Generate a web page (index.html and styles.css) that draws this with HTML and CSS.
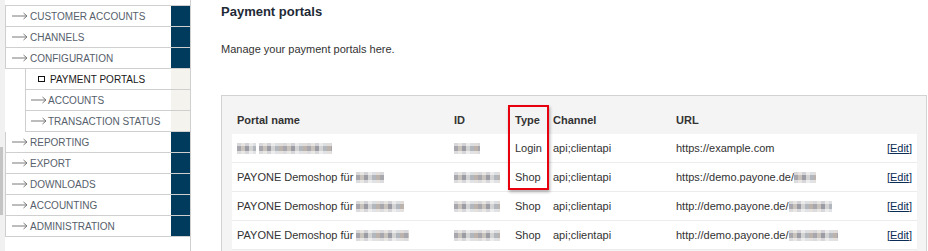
FILE: index.html
```html
<!DOCTYPE html>
<html lang="de">
<head>
    <meta charset="UTF-8">
    <title>Payment portals</title>
    <link rel="stylesheet" href="styles.css">
</head>
<body>
    <div class="frame-scroll"><div class="frame-thumb"></div></div>

    <div class="sidebar">
        <ul class="menu">
            <li class="menu-item"><a class="menu-link"><svg class="arrow" width="16" height="8" viewBox="0 0 16 8"><path d="M0 4H15M11.5 1L15 4L11.5 7"/></svg>CUSTOMER ACCOUNTS</a><span class="mark"></span></li>
            <li class="menu-item"><a class="menu-link"><svg class="arrow" width="16" height="8" viewBox="0 0 16 8"><path d="M0 4H15M11.5 1L15 4L11.5 7"/></svg>CHANNELS</a><span class="mark"></span></li>
            <li class="menu-item"><a class="menu-link"><svg class="arrow" width="16" height="8" viewBox="0 0 16 8"><path d="M0 4H15M11.5 1L15 4L11.5 7"/></svg>CONFIGURATION</a><span class="mark"></span></li>
            <li>
                <ul class="submenu">
                    <li class="menu-item active"><a class="menu-link"><span class="square"></span>PAYMENT PORTALS</a><span class="mark"></span></li>
                    <li class="menu-item"><a class="menu-link"><svg class="arrow" width="16" height="8" viewBox="0 0 16 8"><path d="M0 4H15M11.5 1L15 4L11.5 7"/></svg>ACCOUNTS</a><span class="mark"></span></li>
                    <li class="menu-item"><a class="menu-link"><svg class="arrow" width="16" height="8" viewBox="0 0 16 8"><path d="M0 4H15M11.5 1L15 4L11.5 7"/></svg>TRANSACTION STATUS</a><span class="mark"></span></li>
                </ul>
            </li>
            <li class="menu-item"><a class="menu-link"><svg class="arrow" width="16" height="8" viewBox="0 0 16 8"><path d="M0 4H15M11.5 1L15 4L11.5 7"/></svg>REPORTING</a><span class="mark"></span></li>
            <li class="menu-item"><a class="menu-link"><svg class="arrow" width="16" height="8" viewBox="0 0 16 8"><path d="M0 4H15M11.5 1L15 4L11.5 7"/></svg>EXPORT</a><span class="mark"></span></li>
            <li class="menu-item"><a class="menu-link"><svg class="arrow" width="16" height="8" viewBox="0 0 16 8"><path d="M0 4H15M11.5 1L15 4L11.5 7"/></svg>DOWNLOADS</a><span class="mark"></span></li>
            <li class="menu-item"><a class="menu-link"><svg class="arrow" width="16" height="8" viewBox="0 0 16 8"><path d="M0 4H15M11.5 1L15 4L11.5 7"/></svg>ACCOUNTING</a><span class="mark"></span></li>
            <li class="menu-item"><a class="menu-link"><svg class="arrow" width="16" height="8" viewBox="0 0 16 8"><path d="M0 4H15M11.5 1L15 4L11.5 7"/></svg>ADMINISTRATION</a><span class="mark"></span></li>
        </ul>
    </div>

    <div class="content">
        <h1>Payment portals</h1>
        <p class="intro">Manage your payment portals here.</p>

        <div class="table-box">
            <table class="portals">
                <colgroup>
                    <col class="col-name">
                    <col class="col-id">
                    <col class="col-type">
                    <col class="col-channel">
                    <col class="col-url">
                    <col class="col-edit">
                </colgroup>
                <thead>
                    <tr>
                        <th>Portal name</th>
                        <th>ID</th>
                        <th>Type</th>
                        <th>Channel</th>
                        <th>URL</th>
                        <th></th>
                    </tr>
                </thead>
                <tbody>
                    <tr>
                        <td><span class="blur w19"></span> <span class="blur w73"></span></td>
                        <td><span class="blur w26"></span></td>
                        <td>Login</td>
                        <td>api;clientapi</td>
                        <td>https://example.com</td>
                        <td class="edit">[<a href="#">Edit</a>]</td>
                    </tr>
                    <tr>
                        <td>PAYONE Demoshop für <span class="blur w28"></span></td>
                        <td><span class="blur w46"></span></td>
                        <td>Shop</td>
                        <td>api;clientapi</td>
                        <td>https://demo.payone.de/<span class="blur w22"></span></td>
                        <td class="edit">[<a href="#">Edit</a>]</td>
                    </tr>
                    <tr>
                        <td>PAYONE Demoshop für <span class="blur w48"></span></td>
                        <td><span class="blur w46"></span></td>
                        <td>Shop</td>
                        <td>api;clientapi</td>
                        <td>http://demo.payone.de/<span class="blur w43"></span></td>
                        <td class="edit">[<a href="#">Edit</a>]</td>
                    </tr>
                    <tr>
                        <td>PAYONE Demoshop für <span class="blur w53"></span></td>
                        <td><span class="blur w46"></span></td>
                        <td>Shop</td>
                        <td>api;clientapi</td>
                        <td>http://demo.payone.de/<span class="blur w49"></span></td>
                        <td class="edit">[<a href="#">Edit</a>]</td>
                    </tr>
                </tbody>
            </table>
            <div class="highlight"></div>
        </div>
    </div>
</body>
</html>
```

FILE: styles.css
```css
html, body {
    height: 100%;
}
body {
    margin: 0;
    display: flex;
    overflow: hidden;
    font-family: "Liberation Sans", Arial, sans-serif;
    background-color: white;
    color: #333;
}
.frame-scroll {
    width: 5px;
    flex-shrink: 0;
    background-color: #f1f1f1;
}
.frame-thumb {
    width: 3px;
    height: 68px;
    margin-top: 147px;
    background-color: #c4c4c4;
}
.sidebar {
    width: 185px;
    flex-shrink: 0;
    padding-top: 5px;
    border-right: 1px solid #cfcfcf;
}
.menu, .submenu {
    list-style: none;
    margin: 0;
    padding: 0;
}
.menu {
    border-top: 1px solid #cfcfcf;
}
.submenu {
    margin-left: 20px;
}
.menu-item {
    display: flex;
    height: 20px;
    border-left: 1px solid #cfcfcf;
    border-bottom: 1px solid #cfcfcf;
}
.menu-link {
    flex: 1;
    display: flex;
    align-items: center;
    padding-left: 6px;
    font-size: 10px;
    color: #56606b;
    text-decoration: none;
}
.submenu .menu-link {
    padding-left: 5px;
}
.arrow {
    margin-right: 2px;
    fill: none;
    stroke: #7a7a7a;
    stroke-width: 1;
}
.submenu .arrow {
    margin-right: 1px;
}
.mark {
    width: 19px;
    background-color: #003a5d;
}
.submenu .mark {
    background-color: #f4f3ee;
}
.menu-item.active .menu-link {
    padding-left: 12px;
    color: #1a1a1a;
}
.square {
    width: 5px;
    height: 4px;
    margin-right: 5px;
    border: 1px solid #111;
}
.content {
    padding-left: 30px;
}
h1 {
    margin: 4px 0 0;
    font-size: 13px;
    line-height: 16px;
    color: #1e2a36;
}
.intro {
    margin: 22px 0 0;
    font-size: 11px;
    line-height: 14px;
    color: #333;
}
.table-box {
    position: relative;
    width: 706px;
    box-sizing: border-box;
    margin-top: 39px;
    padding: 10px 9px 10px 10px;
    background-color: #f4f4f4;
    border: 1px solid #d2d2d2;
}
.portals {
    width: 685px;
    table-layout: fixed;
    border-collapse: separate;
    border-spacing: 0;
    font-size: 11px;
}
.col-name { width: 217px; }
.col-id { width: 61px; }
.col-type { width: 38px; }
.col-channel { width: 123px; }
.col-url { width: 206px; }
.col-edit { width: 40px; }
th, td {
    height: 28px;
    padding: 0 5px;
    text-align: left;
    white-space: nowrap;
    vertical-align: middle;
}
th {
    color: #333;
    font-weight: bold;
}
td {
    background-color: white;
    border-bottom: 1px solid #ececec;
}
td.edit {
    text-align: right;
    color: #0b2d55;
}
td.edit a {
    color: #0b2d55;
}
.blur {
    display: inline-block;
    height: 11px;
    vertical-align: -2px;
    background:
        linear-gradient(rgba(255,255,255,0.55) 0 3px, transparent 3px 8px, rgba(255,255,255,0.6) 8px),
        repeating-linear-gradient(90deg, #a8a7ad 0 4px, #c9c3bd 4px 8px, #9c9ca5 8px 12px, #d3d3d3 12px 16px, #b2b7be 16px 20px, #bdb3ad 20px 24px);
}
.w19 { width: 19px; }
.w22 { width: 22px; }
.w26 { width: 26px; }
.w28 { width: 28px; }
.w43 { width: 43px; }
.w46 { width: 46px; }
.w48 { width: 48px; }
.w49 { width: 49px; }
.w53 { width: 53px; }
.w73 { width: 73px; }
.highlight {
    position: absolute;
    left: 286px;
    top: 9px;
    width: 37px;
    height: 81px;
    border: 2px solid #e8000f;
    box-shadow: 1px 2px 3px rgba(0,0,0,0.3);
}
```
